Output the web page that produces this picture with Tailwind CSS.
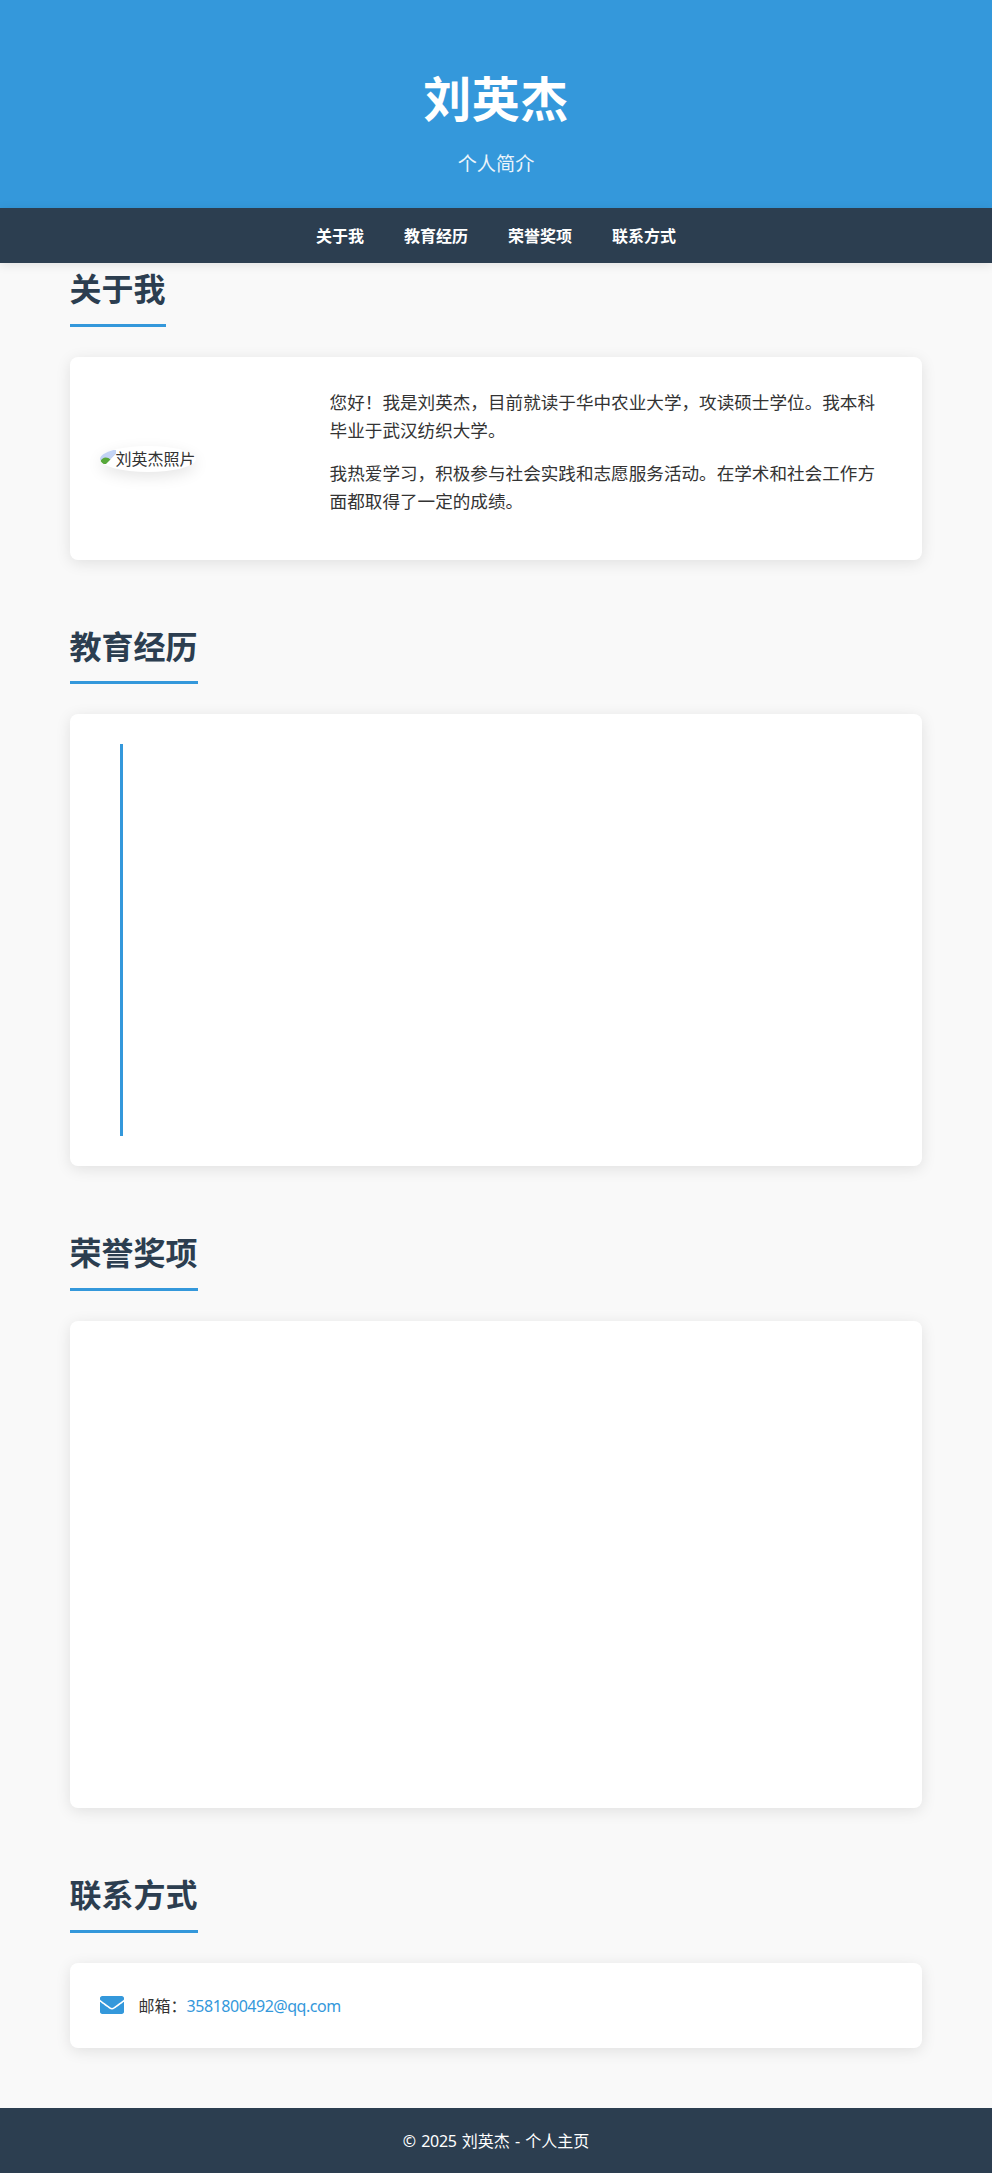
<!DOCTYPE html>
<html lang="zh-CN">
<head>
<meta charset="utf-8">
<title>刘英杰</title>
<script src="https://cdn.jsdelivr.net/npm/@tailwindcss/browser@4"></script>
</head>
<body class="bg-[#f9f9f9] text-[#333] leading-[1.6] font-['Noto_Sans_CJK_SC',sans-serif]">
<header class="bg-[#3498db] text-white text-center pt-[58px] h-[207.5px]">
  <h1 class="text-5xl leading-[76.8px] font-bold tracking-[0.5px] mb-[13px]">刘英杰</h1>
  <p class="text-[19.2px] leading-[30.7px] opacity-90">个人简介</p>
</header>
<nav class="relative bg-[#2c3e50] text-white shadow-[0_2px_10px_rgba(0,0,0,0.1)] h-[55.6px]">
  <ul class="flex justify-center gap-10 py-[15px] font-bold text-base leading-[25.6px]">
    <li><a>关于我</a></li><li><a>教育经历</a></li><li><a>荣誉奖项</a></li><li><a>联系方式</a></li>
  </ul>
</nav>
<main class="w-[90%] px-5 mx-auto">
  <section class="mb-[60px]">
    <h2 class="w-fit text-[32px] leading-[49.2px] font-bold text-[#2c3e50] pb-3 border-b-3 border-[#3498db] mb-[30px]">关于我</h2>
    <div class="bg-white rounded-lg p-[30px] shadow-[0_3px_15px_rgba(0,0,0,0.1)] flex items-center h-[202.6px]">
      <div class="w-[200px] mr-[30px] flex shrink-0">
        <span class="inline-flex items-start w-24 h-[26px] rounded-[50%] overflow-hidden shadow-[0_5px_15px_rgba(0,0,0,0.1)] text-base leading-[25.6px]">
          <svg class="size-4 shrink-0 mt-[3px]" viewBox="0 0 16 16"><path d="M0 1h16v4l-6 6H0z" fill="#c3d3f5"/><path d="M0 13c2-5 7-6 11-2l-3 4H0z" fill="#57a83a"/><path d="M16 5v3L9 15H6z" fill="#fff"/></svg>
          <span class="whitespace-nowrap">刘英杰照片</span>
        </span>
      </div>
      <div class="flex-1 text-[17.6px] leading-[28.16px] pt-px">
        <p class="mb-[14px]">您好！我是刘英杰，目前就读于华中农业大学，攻读硕士学位。我本科毕业于武汉纺织大学。</p>
        <p class="mb-[15px]">我热爱学习，积极参与社会实践和志愿服务活动。在学术和社会工作方面都取得了一定的成绩。</p>
      </div>
    </div>
  </section>
  <section class="mb-[60px]">
    <h2 class="w-fit text-[32px] leading-[51.2px] font-bold text-[#2c3e50] pb-[10px] border-b-3 border-[#3498db] mb-[30px]">教育经历</h2>
    <div class="bg-white rounded-lg p-[30px] shadow-[0_3px_15px_rgba(0,0,0,0.1)] h-[452.4px]">
      <div class="ml-5 w-[3px] h-full bg-[#3498db]"></div>
    </div>
  </section>
  <section class="mb-[60px]">
    <h2 class="w-fit text-[32px] leading-[51.2px] font-bold text-[#2c3e50] pb-[10px] border-b-3 border-[#3498db] mb-[30px]">荣誉奖项</h2>
    <div class="bg-white rounded-lg shadow-[0_3px_15px_rgba(0,0,0,0.1)] h-[487.8px]"></div>
  </section>
  <section class="mb-[60px]">
    <h2 class="w-fit text-[32px] leading-[51.2px] font-bold text-[#2c3e50] pb-[10px] border-b-3 border-[#3498db] mb-[30px]">联系方式</h2>
    <div class="bg-white rounded-lg p-[30px] shadow-[0_3px_15px_rgba(0,0,0,0.1)] flex items-center h-[85.2px]">
      <svg class="size-6 mr-[15px]" viewBox="0 0 512 512" fill="#3498db"><path d="M502.3 190.8c3.9-3.1 9.7-.2 9.7 4.7V400c0 26.5-21.5 48-48 48H48c-26.5 0-48-21.5-48-48V195.600c0-5 5.700-7.800 9.700-4.700 22.400 17.400 52.100 39.500 154.100 113.600 21.100 15.400 56.700 47.800 92.200 47.600 35.700.3 72-32.800 92.300-47.600 102-74.100 131.600-96.300 154-113.700zM256 320c23.200.4 56.600-29.200 73.400-41.400 132.700-96.300 142.800-104.700 173.400-128.700 5.800-4.500 9.200-11.500 9.200-18.900v-19c0-26.500-21.500-48-48-48H48c-26.500 0-48 21.500-48 48v19c0 7.400 3.400 14.300 9.200 18.900 30.600 23.900 40.700 32.400 173.400 128.700 16.800 12.200 50.200 41.800 73.400 41.400z"/></svg>
      <p class="text-base leading-[25.6px] pt-0.5">邮箱：<a class="text-[#3498db] font-['Noto_Sans',sans-serif] tracking-[-0.48px]">3581800492@qq.com</a></p>
    </div>
  </section>
</main>
<footer class="bg-[#2c3e50] text-white text-center h-[65.1px] pt-[21px] text-base leading-[25.6px] font-['Noto_Sans','Noto_Sans_CJK_SC',sans-serif] [word-spacing:1px]">© <span class="tracking-[-0.3px]">2025</span> 刘英杰 - 个人主页</footer>
</body>
</html>
